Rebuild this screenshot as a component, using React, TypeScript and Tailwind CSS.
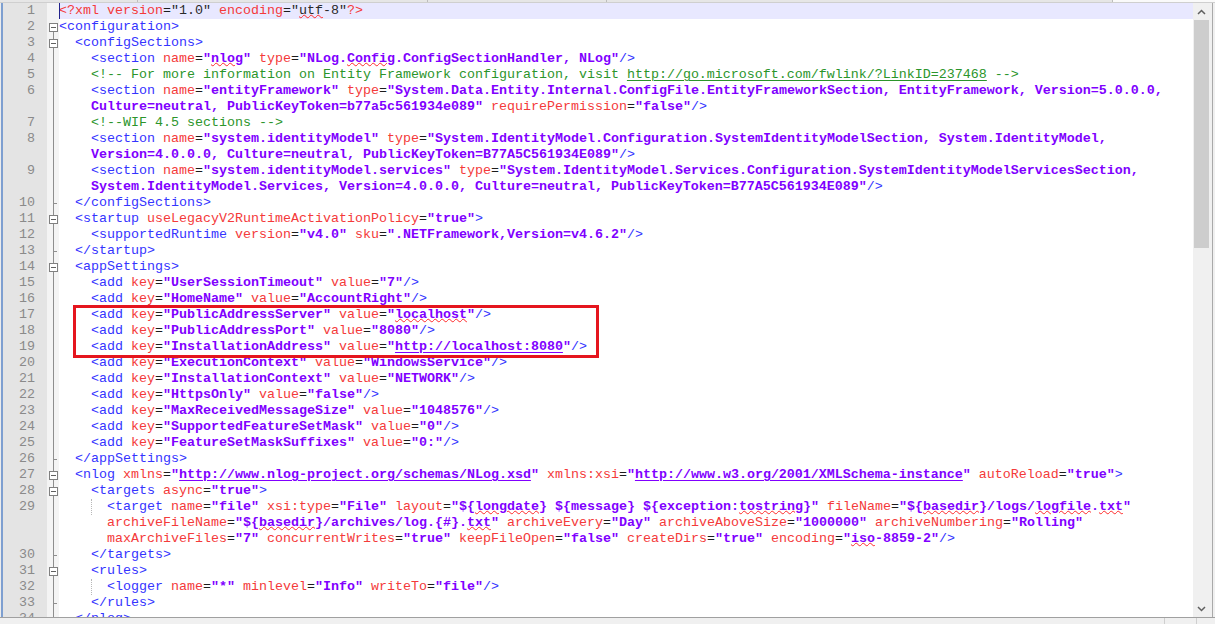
import React from 'react';

type Cat = 'tag' | 'attr' | 'eq' | 'val' | 'comment' | 'decl' | 'dval' | 'plain';
type Deco = '' | 'link' | 'spell';
type Fold = 'none' | 'first' | 'box' | 'line' | 'end';

interface Line {
  n: number;
  ind: number;
  rows: string[];
  fold: Fold;
  spell?: string[];
  links?: string[];
  guide?: boolean;
}

const add = (n: number, k: string, v: string, extra: Partial<Line> = {}): Line => ({
  n,
  ind: 4,
  rows: [`<add key="${k}" value="${v}"/>`],
  fold: 'line',
  ...extra,
});

const LINES: Line[] = [
  { n: 1, ind: 0, rows: ['<?xml version="1.0" encoding="utf-8"?>'], fold: 'none', spell: ['utf'] },
  { n: 2, ind: 0, rows: ['<configuration>'], fold: 'first' },
  { n: 3, ind: 2, rows: ['<configSections>'], fold: 'box' },
  {
    n: 4,
    ind: 4,
    rows: ['<section name="nlog" type="NLog.Config.ConfigSectionHandler, NLog"/>'],
    fold: 'line',
    spell: ['nlog', 'Config'],
  },
  {
    n: 5,
    ind: 4,
    rows: ['<!-- For more information on Entity Framework configuration, visit http://go.microsoft.com/fwlink/?LinkID=237468 -->'],
    fold: 'line',
    links: ['http://go.microsoft.com/fwlink/?LinkID=237468'],
  },
  {
    n: 6,
    ind: 4,
    rows: [
      '<section name="entityFramework" type="System.Data.Entity.Internal.ConfigFile.EntityFrameworkSection, EntityFramework, Version=5.0.0.0, ',
      'Culture=neutral, PublicKeyToken=b77a5c561934e089" requirePermission="false"/>',
    ],
    fold: 'line',
  },
  { n: 7, ind: 4, rows: ['<!--WIF 4.5 sections -->'], fold: 'line' },
  {
    n: 8,
    ind: 4,
    rows: [
      '<section name="system.identityModel" type="System.IdentityModel.Configuration.SystemIdentityModelSection, System.IdentityModel, ',
      'Version=4.0.0.0, Culture=neutral, PublicKeyToken=B77A5C561934E089"/>',
    ],
    fold: 'line',
  },
  {
    n: 9,
    ind: 4,
    rows: [
      '<section name="system.identityModel.services" type="System.IdentityModel.Services.Configuration.SystemIdentityModelServicesSection, ',
      'System.IdentityModel.Services, Version=4.0.0.0, Culture=neutral, PublicKeyToken=B77A5C561934E089"/>',
    ],
    fold: 'line',
  },
  { n: 10, ind: 2, rows: ['</configSections>'], fold: 'end' },
  { n: 11, ind: 2, rows: ['<startup useLegacyV2RuntimeActivationPolicy="true">'], fold: 'box' },
  { n: 12, ind: 4, rows: ['<supportedRuntime version="v4.0" sku=".NETFramework,Version=v4.6.2"/>'], fold: 'line' },
  { n: 13, ind: 2, rows: ['</startup>'], fold: 'end' },
  { n: 14, ind: 2, rows: ['<appSettings>'], fold: 'box' },
  add(15, 'UserSessionTimeout', '7'),
  add(16, 'HomeName', 'AccountRight'),
  add(17, 'PublicAddressServer', 'localhost', { spell: ['localhost'] }),
  add(18, 'PublicAddressPort', '8080'),
  add(19, 'InstallationAddress', 'http://localhost:8080', { links: ['http://localhost:8080'] }),
  add(20, 'ExecutionContext', 'WindowsService'),
  add(21, 'InstallationContext', 'NETWORK'),
  add(22, 'HttpsOnly', 'false'),
  add(23, 'MaxReceivedMessageSize', '1048576'),
  add(24, 'SupportedFeatureSetMask', '0'),
  add(25, 'FeatureSetMaskSuffixes', '0:'),
  { n: 26, ind: 2, rows: ['</appSettings>'], fold: 'end' },
  {
    n: 27,
    ind: 2,
    rows: [
      '<nlog xmlns="http://www.nlog-project.org/schemas/NLog.xsd" xmlns:xsi="http://www.w3.org/2001/XMLSchema-instance" autoReload="true">',
    ],
    fold: 'box',
    links: ['http://www.nlog-project.org/schemas/NLog.xsd', 'http://www.w3.org/2001/XMLSchema-instance'],
  },
  { n: 28, ind: 4, rows: ['<targets async="true">'], fold: 'box' },
  {
    n: 29,
    ind: 6,
    rows: [
      '<target name="file" xsi:type="File" layout="${longdate} ${message} ${exception:tostring}" fileName="${basedir}/logs/logfile.txt" ',
      'archiveFileName="${basedir}/archives/log.{#}.txt" archiveEvery="Day" archiveAboveSize="1000000" archiveNumbering="Rolling" ',
      'maxArchiveFiles="7" concurrentWrites="true" keepFileOpen="false" createDirs="true" encoding="iso-8859-2"/>',
    ],
    fold: 'line',
    spell: ['longdate', 'tostring', 'basedir', 'logfile', 'txt', 'basedir', 'txt', 'iso'],
    guide: true,
  },
  { n: 30, ind: 4, rows: ['</targets>'], fold: 'end' },
  { n: 31, ind: 4, rows: ['<rules>'], fold: 'box' },
  { n: 32, ind: 6, rows: ['<logger name="*" minlevel="Info" writeTo="file"/>'], fold: 'line', guide: true },
  { n: 33, ind: 4, rows: ['</rules>'], fold: 'end' },
  { n: 34, ind: 2, rows: ['</nlog>'], fold: 'end' },
];

function tokenize(s: string): Cat[] {
  const out: Cat[] = new Array(s.length).fill('plain');
  if (s.startsWith('<!--')) return out.fill('comment');
  const decl = s.startsWith('<?');
  const tagC: Cat = decl ? 'decl' : 'tag';
  const attrC: Cat = decl ? 'decl' : 'attr';
  const valC: Cat = decl ? 'dval' : 'val';
  let i = 0;
  while (i < s.length) {
    const c = s[i];
    if (c === '"') {
      out[i] = valC;
      let j = i + 1;
      while (j < s.length && s[j] !== '"') {
        out[j] = valC;
        j++;
      }
      if (j < s.length) out[j] = valC;
      i = j + 1;
      continue;
    }
    if (c === '<') {
      let j = i + 1;
      if (s[j] === '/' || s[j] === '?' || s[j] === '!') j++;
      while (j < s.length && !/[\s>\/]/.test(s[j])) j++;
      for (let k = i; k < j; k++) out[k] = tagC;
      i = j;
      continue;
    }
    if (c === '>') {
      out[i] = tagC;
      i++;
      continue;
    }
    if ((c === '/' || c === '?') && s[i + 1] === '>') {
      out[i] = tagC;
      out[i + 1] = tagC;
      i += 2;
      continue;
    }
    if (c === '=') {
      out[i] = 'eq';
      i++;
      continue;
    }
    if (/\s/.test(c)) {
      i++;
      continue;
    }
    let j = i;
    while (j < s.length && !/[\s=>"]/.test(s[j]) && !(s[j] === '/' && s[j + 1] === '>')) j++;
    if (j === i) j = i + 1;
    for (let k = i; k < j; k++) out[k] = attrC;
    i = j;
  }
  return out;
}

const CAT_CLS: Record<Cat, string> = {
  tag: 'text-[#3434ff]',
  attr: 'text-[#f43a3a]',
  eq: 'text-[#1c1c1c]',
  val: 'text-[#8000ff] font-bold',
  comment: 'text-[#2b952b]',
  decl: 'text-[#f43a3a]',
  dval: 'text-[#2a2a2a]',
  plain: 'text-black',
};

const DECO_CLS: Record<Deco, string> = {
  '': '',
  link: 'underline decoration-1 underline-offset-2',
  spell: 'underline decoration-wavy decoration-[#ff2a2a] decoration-1 underline-offset-0',
};

function FoldMark({ type }: { type: Fold }) {
  const stroke = '#8e8e8e';
  return (
    <svg width="12" height="16" viewBox="0 0 12 16" className="block">
      {type === 'line' && <line x1="6.5" y1="0" x2="6.5" y2="16" stroke={stroke} />}
      {type === 'end' && (
        <>
          <line x1="6.5" y1="0" x2="6.5" y2="16" stroke={stroke} />
          <line x1="6.5" y1="8.5" x2="10" y2="8.5" stroke={stroke} />
        </>
      )}
      {(type === 'box' || type === 'first') && (
        <>
          {type === 'box' && <line x1="6.5" y1="0" x2="6.5" y2="4" stroke={stroke} />}
          <line x1="6.5" y1="12" x2="6.5" y2="16" stroke={stroke} />
          <rect x="2.5" y="4.5" width="8" height="8" fill="#ffffff" stroke="#808080" />
          <line x1="4" y1="8.5" x2="9" y2="8.5" stroke="#606060" />
        </>
      )}
    </svg>
  );
}

interface VRow {
  key: string;
  num?: number;
  fold: Fold;
  ind: number;
  cats: Cat[];
  decos: Deco[];
  text: string;
  start: number;
  end: number;
  highlight: boolean;
  guide: boolean;
}

function buildRows(): VRow[] {
  const rows: VRow[] = [];
  for (const line of LINES) {
    const text = line.rows.join('');
    const cats = tokenize(text);
    const decos: Deco[] = new Array(text.length).fill('');
    line.links?.forEach((l) => {
      const i = text.indexOf(l);
      if (i >= 0) for (let k = i; k < i + l.length; k++) decos[k] = 'link';
    });
    const from: Record<string, number> = {};
    line.spell?.forEach((w) => {
      const i = text.indexOf(w, from[w] ?? 0);
      if (i >= 0) {
        from[w] = i + w.length;
        for (let k = i; k < i + w.length; k++) if (!decos[k]) decos[k] = 'spell';
      }
    });
    let pos = 0;
    line.rows.forEach((r, ri) => {
      rows.push({
        key: `${line.n}-${ri}`,
        num: ri === 0 ? line.n : undefined,
        fold: ri === 0 ? line.fold : line.fold === 'none' ? 'none' : 'line',
        ind: line.ind,
        cats,
        decos,
        text,
        start: pos,
        end: pos + r.length,
        highlight: line.n === 1,
        guide: !!line.guide && ri === 0,
      });
      pos += r.length;
    });
  }
  return rows;
}

function RowText({ row }: { row: VRow }) {
  const spans: React.ReactNode[] = [];
  let i = row.start;
  while (i < row.end) {
    let j = i + 1;
    while (j < row.end && row.cats[j] === row.cats[i] && row.decos[j] === row.decos[i]) j++;
    const cls = `${CAT_CLS[row.cats[i]]} ${DECO_CLS[row.decos[i]]}`;
    spans.push(
      <span key={i} className={cls}>
        {row.text.slice(i, j)}
      </span>
    );
    i = j;
  }
  return (
    <>
      {' '.repeat(row.ind)}
      {spans}
    </>
  );
}

function Chevron({ up }: { up: boolean }) {
  return (
    <svg width="9" height="6" viewBox="0 0 9 6">
      <path
        d={up ? 'M1 5 L4.5 1.5 L8 5' : 'M1 1 L4.5 4.5 L8 1'}
        fill="none"
        stroke="#606060"
        strokeWidth="1.5"
      />
    </svg>
  );
}

export default function App() {
  const rows = buildRows();
  return (
    <div className="w-[1215px] h-[624px] flex flex-col overflow-hidden bg-[#f0f0f0] font-['Liberation_Mono',monospace] text-[13.33px] leading-[16px]">
      <div className="h-[3px] shrink-0 flex bg-[#e6e6e6] border-b border-[#cfcfcf]">
        <div className="w-[138px] border-r border-[#bdbdbd]" />
        <div className="w-[290px] border-r border-[#bdbdbd]" />
        <div className="w-[179px] border-r border-[#bdbdbd]" />
        <div className="w-[506px] border-r border-[#bdbdbd]" />
        <div className="flex-1 bg-[#fafafa]" />
      </div>
      <div className="flex-1 flex min-h-0">
        <div className="w-[3px] shrink-0 flex">
          <div className="w-[1px] bg-[#ececec]" />
          <div className="w-[2px] bg-[#7e9fd0]" />
        </div>
        <div className="relative flex-1 min-w-0 flex flex-col overflow-hidden bg-white">
          {rows.map((row) => (
            <div key={row.key} className="flex h-[16px] shrink-0">
              <div className="w-[44px] shrink-0 bg-[#e4e4e4] text-right pr-[12px] text-[#8a8a8a]">
                {row.num ?? ''}
              </div>
              <div className="w-[12px] shrink-0 bg-[#f4f4f4]">
                <FoldMark type={row.fold} />
              </div>
              <div
                className={`relative flex-1 min-w-0 whitespace-pre overflow-hidden ${
                  row.highlight ? 'bg-[#e8e8ff]' : ''
                }`}
              >
                {row.highlight && <div className="absolute left-0 top-0 w-[1px] h-full bg-[#23238c]" />}
                {row.guide && (
                  <div className="absolute left-[32px] top-0 h-full border-l border-dotted border-[#b8b8b8]" />
                )}
                <RowText row={row} />
              </div>
            </div>
          ))}
          <div className="absolute left-[70px] top-[302px] w-[526px] h-[53px] border-[3px] border-[#e5151e]" />
        </div>
        <div className="w-[17px] shrink-0 flex flex-col bg-[#f0f0f0]">
          <div className="h-[17px] shrink-0 flex items-center justify-center">
            <Chevron up />
          </div>
          <div className="h-[228px] shrink-0 mx-[1px] bg-[#cdcdcd]" />
          <div className="flex-1" />
          <div className="h-[17px] shrink-0 flex items-center justify-center">
            <Chevron up={false} />
          </div>
        </div>
        <div className="w-[5px] shrink-0 flex">
          <div className="w-[2px] bg-[#f0f0f0]" />
          <div className="w-[1px] bg-[#a9a9a9]" />
          <div className="w-[2px] bg-[#f0f0f0]" />
        </div>
      </div>
      <div className="h-[7px] shrink-0 border-t border-[#a0a0a0] bg-[#f0f0f0] flex">
        <div className="w-[1165px] border-r border-[#cfcfcf]" />
        <div className="w-[32px] border-r border-[#cfcfcf]" />
        <div className="flex-1" />
      </div>
    </div>
  );
}
